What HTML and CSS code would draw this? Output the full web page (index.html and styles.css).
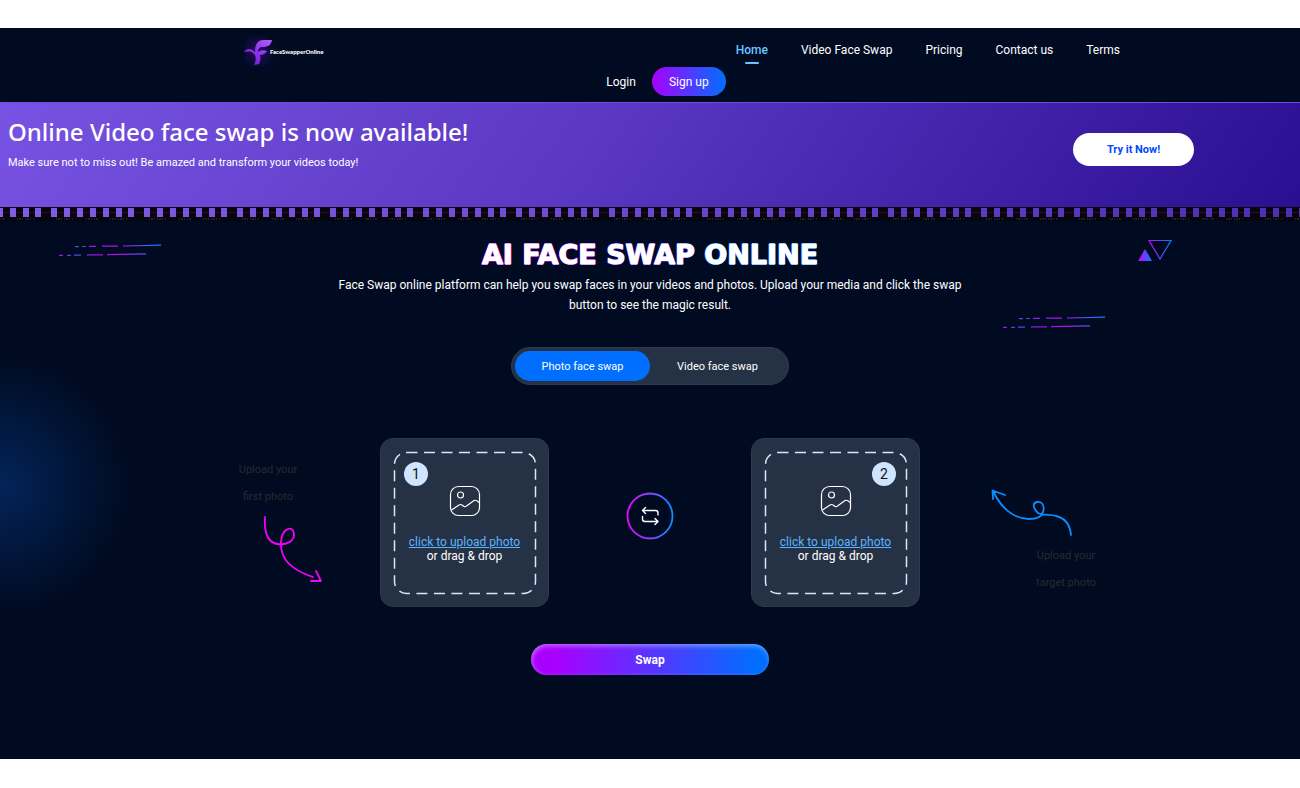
FILE: index.html
```html
<!DOCTYPE html>
<html lang="en">
<head>
  <meta charset="UTF-8">
  <meta name="viewport" content="width=device-width, initial-scale=1.0">
  <title>Face Swapper Online</title>
  <link rel="stylesheet" href="styles.css">
</head>
<body>
  <div class="page">
    <header class="header">
      <div class="header-top">
        <a class="logo" href="#">
          <svg width="28" height="26" viewBox="0 0 28 26" aria-hidden="true">
            <defs>
              <linearGradient id="logo-fill" x1="0" y1="1" x2="1" y2="0">
                <stop offset="0" stop-color="#6a0fd0"/>
                <stop offset="1" stop-color="#b45cff"/>
              </linearGradient>
            </defs>
            <path fill="url(#logo-fill)" d="M28 1c-1 5-4 7-9 7-4 0-5 2-5 5 3-2 6-2 9-1-2 3-5 4-7 4 1 4 0 7-1 9l-5 1c2-4 2-7 1-10-3-4-6-4-11-3 3-4 7-4 11 0 0-8 3-12 8-12z"/>
          </svg>
          <span>FaceSwapperOnline</span>
        </a>
        <nav class="nav">
          <a class="active" href="#">Home</a>
          <a href="#">Video Face Swap</a>
          <a href="#">Pricing</a>
          <a href="#">Contact us</a>
          <a href="#">Terms</a>
        </nav>
      </div>
      <div class="account">
        <a class="login" href="#">Login</a>
        <button class="signup">Sign up</button>
      </div>
    </header>

    <section class="banner">
      <div class="banner-content">
        <div>
          <h2>Online Video face swap is now available!</h2>
          <p>Make sure not to miss out! Be amazed and transform your videos today!</p>
        </div>
        <button class="try">Try it Now!</button>
      </div>
      <svg class="film" width="100%" height="14" aria-hidden="true">
        <defs>
          <pattern id="film-holes" x="-45" y="0" width="93" height="14" patternUnits="userSpaceOnUse">
            <path fill="#08050f" fill-rule="evenodd" d="M0 0H93V14H0zM3 1h6v9h-6zM16 1h6v9h-6zM29 1h6v9h-6zM42 1h6v9h-6zM55 1h6v9h-6zM68 1h6v9h-6zM80 1h6v9h-6z"/>
            <path fill="#9d7bff" fill-opacity=".3" d="M3 1h6v9h-6zM16 1h6v9h-6zM29 1h6v9h-6zM42 1h6v9h-6zM55 1h6v9h-6zM68 1h6v9h-6zM80 1h6v9h-6z"/>
            <path stroke="#24202a" stroke-width="2" stroke-dasharray="1 1 2 1 1 2" d="M8 12h17M38 12h12M62 12h18"/>
            <path stroke="#1c1726" d="M0 5.5h3M9 5.5h7M22 5.5h7M35 5.5h7M48 5.5h7M61 5.5h7M74 5.5h6M86 5.5h7"/>
          </pattern>
        </defs>
        <rect width="100%" height="14" fill="url(#film-holes)"/>
      </svg>
    </section>

    <main class="main">
      <svg class="decor lines-left" width="104" height="14" viewBox="0 0 104 14" aria-hidden="true">
        <defs>
          <linearGradient id="line-fill" gradientUnits="userSpaceOnUse" x1="0" y1="0" x2="104" y2="0">
            <stop offset="0" stop-color="#a30fe0"/>
            <stop offset=".2" stop-color="#3a55d8"/>
            <stop offset=".35" stop-color="#a010e0"/>
            <stop offset=".6" stop-color="#b010f0"/>
            <stop offset="1" stop-color="#0b84ff"/>
          </linearGradient>
        </defs>
        <g id="speed-lines" stroke="url(#line-fill)" stroke-width="1.2" fill="none">
          <path d="M17 2.6h4M24 2.5h4M31 2.4h7M44 2.2h16M65 2l38-.9M1 11.4h4M9 11.3h4M16 11.2h7M29 10.8h16M49 10.6l39-.8"/>
        </g>
      </svg>
      <svg class="decor lines-right" width="104" height="14" viewBox="0 0 104 14" aria-hidden="true">
        <use href="#speed-lines"/>
      </svg>
      <svg class="decor triangles" width="36" height="24" viewBox="0 0 36 24" aria-hidden="true">
        <defs>
          <linearGradient id="tri-fill">
            <stop offset="0" stop-color="#c800ff"/>
            <stop offset="1" stop-color="#0b7dff"/>
          </linearGradient>
        </defs>
        <path fill="url(#tri-fill)" d="M1 23 8 11 15 23z"/>
        <path fill="none" stroke="url(#tri-fill)" stroke-width="1.2" d="M12 2.5H34L23 21z"/>
      </svg>

      <h1>
        <span class="tone-1">AI</span>
        <span class="tone-2">FACE</span>
        <span class="tone-3">SWAP</span>
        <span class="tone-4">ONLINE</span>
      </h1>
      <p class="intro">Face Swap online platform can help you swap faces in your videos and photos. Upload your media and click the swap button to see the magic result.</p>

      <div class="tabs">
        <button class="tab selected">Photo face swap</button>
        <button class="tab">Video face swap</button>
      </div>

      <div class="workspace">
        <div class="hint hint-first">
          <p>Upload your<br>first photo</p>
          <svg width="62" height="68" viewBox="0 0 62 68" fill="none" stroke="#f400ff" stroke-width="1.8" stroke-linecap="round" stroke-linejoin="round" aria-hidden="true">
            <path d="M3 1C2 16 5 26 15 28C25 30 32 24 32 19C32 12 27 11 23 15C18 20 18 32 21 39C26 51 39 57 51 61M54 55L59 65L49 65"/>
          </svg>
        </div>

        <div class="uploads">
          <div class="card">
            <svg class="dashes" width="144" height="144" aria-hidden="true">
              <rect x="1.5" y="1.5" width="141" height="141" rx="12"/>
            </svg>
            <span class="number number-left">1</span>
            <svg class="picture" width="32" height="32" viewBox="0 0 32 32" aria-hidden="true">
              <rect x="1.5" y="1.5" width="29" height="29" rx="8"/>
              <circle cx="11.5" cy="10" r="3"/>
              <path d="M2.5 25L10 20Q11.5 19 13 20L15 21.5Q16 22 17.5 21L25 15.5Q27 14.5 30 17.5"/>
            </svg>
            <a href="#">click to upload photo</a>
            <span>or drag &amp; drop</span>
          </div>

          <button class="exchange" aria-label="Exchange photos">
            <svg width="48" height="48" viewBox="0 0 48 48" fill="none" aria-hidden="true">
              <circle cx="24" cy="24" r="22.5" stroke="url(#ring)" stroke-width="1.8"/>
              <path d="M19.5 15.5L16.5 18.5L19.5 21.5M17 18.5H29.5Q32 18.5 32 21V23M16.5 24.5V27Q16.5 29.5 19 29.5H31.5M29 26.5L32 29.5L29 32.5" stroke="#fff" stroke-width="1.4" stroke-linecap="round" stroke-linejoin="round"/>
              <defs>
                <linearGradient id="ring">
                  <stop offset="0" stop-color="#f000ff"/>
                  <stop offset="1" stop-color="#0b8cff"/>
                </linearGradient>
              </defs>
            </svg>
          </button>

          <div class="card">
            <svg class="dashes" width="144" height="144" aria-hidden="true">
              <rect x="1.5" y="1.5" width="141" height="141" rx="12"/>
            </svg>
            <span class="number number-right">2</span>
            <svg class="picture" width="32" height="32" viewBox="0 0 32 32" aria-hidden="true">
              <rect x="1.5" y="1.5" width="29" height="29" rx="8"/>
              <circle cx="11.5" cy="10" r="3"/>
              <path d="M2.5 25L10 20Q11.5 19 13 20L15 21.5Q16 22 17.5 21L25 15.5Q27 14.5 30 17.5"/>
            </svg>
            <a href="#">click to upload photo</a>
            <span>or drag &amp; drop</span>
          </div>
        </div>

        <div class="hint hint-target">
          <svg width="84" height="50" viewBox="0 0 84 50" fill="none" stroke="#0b8cff" stroke-width="1.8" stroke-linecap="round" stroke-linejoin="round" aria-hidden="true">
            <path d="M81 47C80 36 75 30 66 28C60 26 54 28 48 25C43 20 42 15 47 14C52 13 55 18 53 24C52 28 47 31 39 31C24 31 11 20 3 3M3 11L2.5 2.5L15 7"/>
          </svg>
          <p>Upload your<br>target photo</p>
        </div>
      </div>

      <button class="swap">Swap</button>
    </main>
  </div>
</body>
</html>
```
FILE: styles.css
```css
* {
  box-sizing: border-box;
}

body {
  margin: 0;
  padding: 28px 0;
  background-color: #ffffff;
  color: #ffffff;
  font-family: Roboto, sans-serif;
  font-size: 12px;
}

h1,
h2,
p {
  margin: 0;
}

a {
  color: inherit;
  text-decoration: none;
}

button {
  border: none;
  padding: 0;
  color: inherit;
  font: inherit;
  cursor: pointer;
}

svg {
  display: block;
}

.page {
  background: #000b22;
}

/* Header */
.header {
  height: 74px;
  padding-top: 8px;
}

.header-top {
  display: flex;
  justify-content: space-between;
  height: 31px;
  padding: 0 180px 0 244px;
}

.logo {
  display: flex;
  align-items: center;
  height: 31px;
  background: radial-gradient(circle at 14px 15px, #2b0a66 0, transparent 18px);
}

.logo span {
  margin-left: -2px;
  font-family: Lato, sans-serif;
  font-size: 6px;
  font-weight: 900;
}

.nav {
  display: flex;
  gap: 33px;
  line-height: 28px;
}

.nav .active {
  position: relative;
  color: #6cc4ff;
  font-weight: 500;
}

.nav .active::after {
  content: "";
  position: absolute;
  top: 26px;
  left: 50%;
  width: 14px;
  height: 2px;
  margin-left: -7px;
  border-radius: 1px;
  background: #6cc4ff;
}

.account {
  display: flex;
  align-items: center;
  justify-content: center;
  gap: 16px;
  padding-left: 32px;
}

.signup {
  width: 74px;
  height: 29px;
  border-radius: 15px;
  background: linear-gradient(90deg, #a800ff, #0070ff);
}

/* Banner */
.banner {
  border-top: 1px solid #7548ea;
  background: linear-gradient(125deg, #7853e3, #5a38c2 45%, #2a0d91);
}

.banner-content {
  display: flex;
  justify-content: space-between;
  height: 104px;
  padding: 12px 106px 0 8px;
}

.banner h2 {
  font-family: "Noto Sans", sans-serif;
  font-size: 24px;
  font-weight: 500;
  line-height: 34px;
}

.banner p {
  margin-top: 6px;
  line-height: 16px;
  font-size: 11px;
}

.try {
  width: 121px;
  height: 33px;
  margin-top: 18px;
  border-radius: 17px;
  background: #ffffff;
  color: #0048ff;
  font-size: 11px;
  font-weight: 700;
}

/* Main */
.main {
  position: relative;
  display: flex;
  flex-direction: column;
  align-items: center;
  padding: 16px 0 84px;
  overflow: hidden;
  background: radial-gradient(circle at 0 264px, #032459 0, rgba(0, 11, 34, 0) 126px);
}

.decor {
  position: absolute;
}

.lines-left {
  top: 23px;
  left: 58px;
}

.lines-right {
  top: 95px;
  right: 194px;
}

.triangles {
  top: 17px;
  right: 127px;
}

h1 {
  font-family: "DejaVu Sans", sans-serif;
  font-size: 27px;
  font-weight: 700;
  line-height: 36px;
  -webkit-text-stroke: 1px #ffffff;
}

.tone-1 { text-shadow: -1px 0 #f000ff, 1px 0 #e000ff, 0 1px #e000ff, 0 -1px #e000ff; }
.tone-2 { text-shadow: -1px 0 #d000ff, 1px 0 #b020ff, 0 1px #b820ff, 0 -1px #b820ff; }
.tone-3 { text-shadow: -1px 0 #8040ff, 1px 0 #6040ff, 0 1px #6040ff, 0 -1px #6040ff; }
.tone-4 { text-shadow: -1px 0 #2070ff, 1px 0 #1890ff, 0 1px #1890ff, 0 -1px #1890ff; }

.intro {
  width: 650px;
  max-width: 100%;
  margin-top: 2px;
  text-align: center;
  line-height: 20px;
}

.tabs {
  display: flex;
  width: 278px;
  height: 38px;
  margin-top: 32px;
  padding: 3px;
  border: 1px solid #303a4a;
  border-radius: 19px;
  background: #253145;
  font-size: 11px;
}

.tab {
  flex: 1;
  border-radius: 15px;
  background: none;
}

.tab.selected {
  background: #006eff;
}

.workspace {
  display: flex;
  justify-content: center;
  gap: 56px;
  width: 100%;
  margin-top: 53px;
}

.hint {
  display: flex;
  flex-direction: column;
  width: 180px;
  color: #282a30;
  font-size: 11px;
  text-align: center;
  line-height: 27px;
}

.hint-first {
  padding: 18px 0 0 68px;
}

.hint-first svg {
  align-self: flex-end;
  margin-top: 6px;
}

.hint-target {
  padding: 50px 14px 0;
}

.hint-target p {
  margin-top: 4px;
}

.uploads {
  display: flex;
  align-items: center;
  justify-content: space-between;
  width: 540px;
}

.card {
  position: relative;
  display: flex;
  flex-direction: column;
  align-items: center;
  width: 169px;
  height: 169px;
  padding-top: 46px;
  border: 1px solid #303a4a;
  border-radius: 13px;
  background: #253145;
  line-height: 14px;
}

.card a {
  margin-top: 18px;
  color: #5ab4ff;
  text-decoration: underline;
}

.dashes {
  position: absolute;
  top: 12px;
  left: 12px;
  fill: none;
  stroke: #d5e8ff;
  stroke-width: 1.5;
  stroke-dasharray: 11 6.5;
}

.picture {
  fill: none;
  stroke: #ffffff;
  stroke-width: 1.2;
}

.number {
  position: absolute;
  top: 23px;
  width: 24px;
  height: 24px;
  border-radius: 50%;
  background: #cfe4ff;
  color: #111111;
  font-size: 14px;
  line-height: 24px;
  text-align: center;
}

.number-left {
  left: 23px;
}

.number-right {
  right: 23px;
}

.exchange {
  margin-top: -14px;
  background: none;
}

.swap {
  width: 238px;
  height: 31px;
  margin-top: 37px;
  border-radius: 16px;
  background: linear-gradient(90deg, #a800ff 10%, #006eff 95%);
  box-shadow: inset 1px 2px 5px rgba(255, 255, 255, 0.4);
  font-weight: 700;
}
```
